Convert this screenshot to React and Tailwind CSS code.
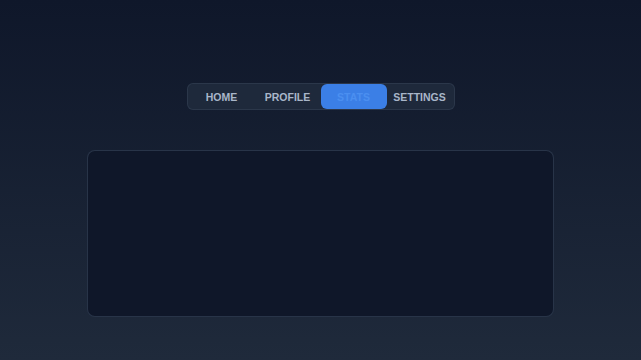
import { useState } from "react";

const tabs = ["HOME", "PROFILE", "STATS", "SETTINGS"];

export default function App() {
  const [active, setActive] = useState("STATS");

  return (
    <div className="min-h-screen w-full bg-gradient-to-b from-[#0f172a] to-[#1f2a3b] flex flex-col items-center pt-[83px] font-['Liberation_Sans',Arial,sans-serif]">
      {/* tab bar */}
      <nav className="flex px-px rounded-md bg-[#1e293b] border border-[#334155]/60">
        {tabs.map((tab) => (
          <button
            key={tab}
            onClick={() => setActive(tab)}
            className={
              tab === active
                ? "w-[66px] h-[25px] pt-[2px] rounded-md bg-[#3b7fe6] text-[#4b8ff0] text-[10.5px] font-bold"
                : "w-[66px] h-[25px] pt-[2px] rounded-md text-[#a9b6c9] text-[10.5px] font-bold"
            }
          >
            {tab}
          </button>
        ))}
      </nav>

      {/* content panel */}
      <div className="mt-[40px] w-[467px] h-[167px] rounded-lg bg-[#0f1729] border border-[#334155]/70"></div>
    </div>
  );
}
